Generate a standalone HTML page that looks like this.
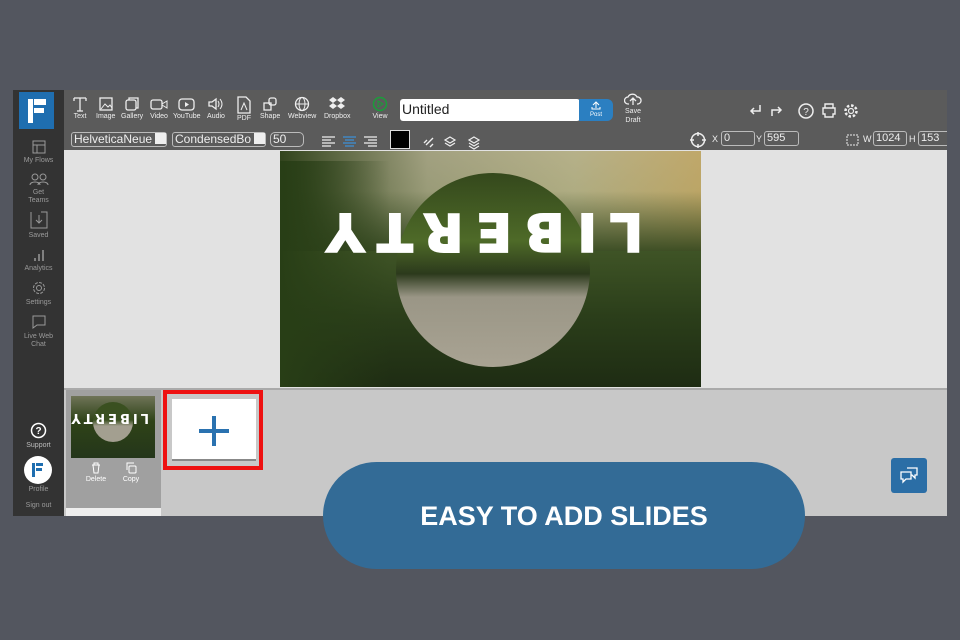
<!DOCTYPE html>
<html><head><style>
*{margin:0;padding:0;box-sizing:border-box}
body{width:960px;height:640px;background:#53565f;font-family:"Liberation Sans",sans-serif;position:relative;overflow:hidden}
.abs{position:absolute}
.side{left:13px;top:90px;width:51px;height:426px;background:#333}
.si{position:absolute;left:0;width:51px;text-align:center;color:#9a9a9a;font-size:7px;line-height:8px}
.tb{left:64px;top:90px;width:883px;height:60px;background:#5b5b5b}
.tool{position:absolute;top:6px;text-align:center;color:#eee;font-size:7px}
.tool svg{display:block;margin:0 auto 1px}
.inp{position:absolute;border:1px solid #bbb;border-radius:3px;color:#eee;font-size:11px;line-height:13px;padding-left:2px;height:15px}
</style></head><body>
<div class="abs side">
  <div class="abs" style="left:6px;top:2px;width:35px;height:37px;background:#1f6eb0"></div>
  <svg class="abs" style="left:14px;top:8px" width="20" height="26"><rect x="1" y="1" width="5" height="24" fill="#fff"/><rect x="7" y="1" width="12" height="6" fill="#fff"/><rect x="7" y="10" width="10" height="5" fill="#fff"/></svg>
  <div class="si" style="top:50px"><svg width="14" height="14"><rect x="1" y="1" width="12" height="12" fill="none" stroke="#999"/><line x1="1" y1="5" x2="13" y2="5" stroke="#999"/><line x1="5" y1="5" x2="5" y2="13" stroke="#999"/></svg><br>My Flows</div>
  <div class="si" style="top:82px"><svg width="20" height="14"><circle cx="6" cy="5" r="3" fill="none" stroke="#999"/><circle cx="14" cy="5" r="3" fill="none" stroke="#999"/><path d="M1 13c0-4 10-4 10 0M9 13c0-4 10-4 10 0" fill="none" stroke="#999"/></svg><br>Get<br>Teams</div>
  <div class="si" style="top:121px"><svg width="18" height="18"><path d="M1 1v16h16V1H11" fill="none" stroke="#999"/><path d="M9 4v8M6 9l3 3 3-3" fill="none" stroke="#999"/></svg><br>Saved</div>
  <div class="si" style="top:158px"><svg width="14" height="14"><path d="M3 13v-3M7 13V6M11 13V2" stroke="#999" stroke-width="1.5"/></svg><br>Analytics</div>
  <div class="si" style="top:190px"><svg width="16" height="16"><circle cx="8" cy="8" r="5.5" fill="none" stroke="#999" stroke-dasharray="3 1.3"/><circle cx="8" cy="8" r="2.5" fill="none" stroke="#999"/></svg><br>Settings</div>
  <div class="si" style="top:224px"><svg width="16" height="16"><path d="M2 2h12v9H6l-4 3z" fill="none" stroke="#999"/></svg><br>Live Web<br>Chat</div>
  <div class="si" style="top:332px;color:#bbb"><svg width="17" height="17"><circle cx="8.5" cy="8.5" r="7" fill="none" stroke="#fff" stroke-width="1.5"/><text x="8.5" y="12" font-size="10" text-anchor="middle" fill="#fff" font-family="Liberation Sans" font-weight="bold">?</text></svg><br>Support</div>
  <div class="abs" style="left:11px;top:366px;width:28px;height:28px;border-radius:50%;background:#fff"></div>
  <svg class="abs" style="left:18px;top:372px" width="14" height="16"><rect x="1" y="1" width="3" height="14" fill="#1f6eb0"/><rect x="5" y="1" width="7" height="3" fill="#1f6eb0"/><rect x="5" y="6" width="6" height="3" fill="#1f6eb0"/></svg>
  <div class="si" style="top:396px">Profile</div>
  <div class="si" style="top:412px">Sign out</div>
</div>
<div class="abs tb">
  <div class="tool" style="left:8px"><svg width="16" height="16"><path d="M2 2h12M8 2v13M2 2v3M14 2v3M5 15h6" stroke="#eee" fill="none" stroke-width="1.3"/></svg>Text</div>
  <div class="tool" style="left:32px"><svg width="16" height="16"><rect x="2" y="2" width="12" height="12" fill="none" stroke="#eee" stroke-width="1.3"/><path d="M3 13l4-5 3 3 2-2 2 3" stroke="#eee" fill="none"/></svg>Image</div>
  <div class="tool" style="left:57px"><svg width="16" height="16"><rect x="2" y="4" width="10" height="10" rx="2" fill="none" stroke="#eee" stroke-width="1.3"/><path d="M5 4V2h9v10h-2" stroke="#eee" fill="none" stroke-width="1.3"/></svg>Gallery</div>
  <div class="tool" style="left:86px"><svg width="18" height="16"><rect x="1" y="4" width="11" height="9" rx="2" fill="none" stroke="#eee" stroke-width="1.3"/><path d="M12 8l5-3v7l-5-3" stroke="#eee" fill="none"/></svg>Video</div>
  <div class="tool" style="left:109px"><svg width="18" height="16"><rect x="1" y="3" width="15" height="11" rx="3" fill="none" stroke="#eee" stroke-width="1.3"/><path d="M7 6v5l4-2.5z" fill="#eee"/></svg>YouTube</div>
  <div class="tool" style="left:143px"><svg width="18" height="16"><path d="M2 6h3l4-3v10l-4-3H2z" fill="none" stroke="#eee" stroke-width="1.3"/><path d="M11 5q2 3 0 6M13 3q4 5 0 10" fill="none" stroke="#eee"/></svg>Audio</div>
  <div class="tool" style="left:172px"><svg width="16" height="18"><path d="M2 1h8l4 4v12H2z" fill="none" stroke="#eee" stroke-width="1.3"/><path d="M5 14l3-7 3 7" fill="none" stroke="#eee"/></svg>PDF</div>
  <div class="tool" style="left:196px"><svg width="16" height="16"><rect x="2" y="7" width="7" height="7" fill="none" stroke="#eee" stroke-width="1.3"/><rect x="7" y="2" width="7" height="7" rx="2" fill="none" stroke="#eee" stroke-width="1.3"/></svg>Shape</div>
  <div class="tool" style="left:224px"><svg width="16" height="16"><circle cx="8" cy="8" r="6.5" fill="none" stroke="#eee" stroke-width="1.3"/><ellipse cx="8" cy="8" rx="3" ry="6.5" fill="none" stroke="#eee"/><path d="M1.5 8h13" stroke="#eee"/></svg>Webview</div>
  <div class="tool" style="left:260px"><svg width="18" height="16"><path d="M5 1l4 3-4 3-4-3zM13 1l4 3-4 3-4-3zM5 7l4 3-4 3-4-3zM13 7l4 3-4 3-4-3z" fill="#eee"/></svg>Dropbox</div>
  <div class="tool" style="left:308px"><svg width="16" height="16"><circle cx="8" cy="8" r="6.5" fill="none" stroke="#1a9e3a" stroke-width="1.5"/><path d="M6 5v6l5-3z" fill="none" stroke="#1a9e3a"/></svg>View</div>
  <div class="abs" style="left:336px;top:9px;width:180px;height:22px;background:#fff;border-radius:3px;font-size:14px;padding:2px 2px;color:#222">Untitled</div>
  <div class="abs" style="left:515px;top:9px;width:34px;height:22px;background:#2b7fc1;border-radius:0 6px 6px 0;color:#fff;font-size:6px;text-align:center;padding-top:2px"><svg width="10" height="9"><path d="M5 7V1M2 4l3-3 3 3M1 6v2h8V6" stroke="#fff" fill="none"/></svg><br>Post</div>
  <div class="tool" style="left:560px;top:2px;line-height:9px"><svg width="18" height="14"><path d="M5 12H4a3 3 0 010-7 5 5 0 019 0 3 3 0 011 7h-1M9 13V6M6 9l3-3 3 3" stroke="#eee" fill="none" stroke-width="1.3"/></svg>Save<br>Draft</div>
  <svg class="abs" style="left:684px;top:12px" width="110" height="18"><path d="M12 3v6H3M6 6L3 9l3 3" stroke="#eee" fill="none" stroke-width="1.5"/><path d="M24 14V8h9M30 5l3 3-3 3" stroke="#eee" fill="none" stroke-width="1.5"/><circle cx="58" cy="9" r="7" fill="none" stroke="#eee" stroke-width="1.5"/><text x="58" y="13" font-size="10" text-anchor="middle" fill="#eee" font-family="Liberation Sans">?</text><path d="M77 6V2h8v4M75 6h12v6h-2v3h-8v-3h-2z" stroke="#eee" fill="none" stroke-width="1.4"/><circle cx="103" cy="9" r="5.5" fill="none" stroke="#eee" stroke-width="2.5" stroke-dasharray="2.5 1.8"/><circle cx="103" cy="9" r="2.5" fill="none" stroke="#eee" stroke-width="1.2"/></svg>
  <div class="inp" style="left:7px;top:42px;width:96px;font-size:12px">HelveticaNeue</div><div class="abs" style="left:91px;top:43px;width:11px;height:11px;background:#eee"></div>
  <div class="inp" style="left:108px;top:42px;width:94px;font-size:12px">CondensedBo</div><div class="abs" style="left:190px;top:43px;width:11px;height:11px;background:#eee"></div>
  <div class="inp" style="left:206px;top:42px;width:34px;border-radius:5px;font-size:12px">50</div>
  <svg class="abs" style="left:256px;top:46px" width="60" height="12"><path d="M2 1h13M2 4h9M2 7h13M2 10h9" stroke="#eee" stroke-width="1.3"/><path d="M23 1h13M25 4h9M23 7h13M25 10h9" stroke="#3d8fd6" stroke-width="1.3"/><path d="M44 1h13M48 4h9M44 7h13M48 10h9" stroke="#eee" stroke-width="1.3"/></svg>
  <div class="abs" style="left:326px;top:40px;width:20px;height:19px;background:#000;border:1px solid #ddd"></div>
  <svg class="abs" style="left:358px;top:44px" width="66" height="16"><path d="M4 11l7-7M2 9l3-3M8 13l3-3" stroke="#eee" stroke-width="1.4" fill="none"/><path d="M28 3l5 3-5 3-5-3zM23 9l5 3 5-3" stroke="#eee" fill="none" stroke-width="1.2"/><path d="M52 3l5 3-5 3-5-3zM47 9l5 3 5-3M47 12l5 3 5-3" stroke="#eee" fill="none" stroke-width="1.2"/></svg>
  <svg class="abs" style="left:625px;top:41px" width="18" height="18"><circle cx="9" cy="9" r="6.5" fill="none" stroke="#eee" stroke-width="1.5"/><path d="M9 1v4M9 13v4M1 9h4M13 9h4" stroke="#eee" stroke-width="1.5"/></svg>
  <span class="abs" style="left:648px;top:44px;color:#eee;font-size:9px">X</span><div class="inp" style="left:657px;top:41px;width:34px">0</div>
  <span class="abs" style="left:692px;top:44px;color:#eee;font-size:9px">Y</span><div class="inp" style="left:700px;top:41px;width:35px">595</div>
  <svg class="abs" style="left:782px;top:44px" width="14" height="12"><rect x="1" y="1" width="11" height="10" fill="none" stroke="#eee" stroke-dasharray="2 1"/></svg>
  <span class="abs" style="left:799px;top:44px;color:#eee;font-size:9px">W</span><div class="inp" style="left:809px;top:41px;width:34px">1024</div>
  <span class="abs" style="left:845px;top:44px;color:#eee;font-size:9px">H</span><div class="inp" style="left:854px;top:41px;width:29px;border-right:none;border-radius:3px 0 0 3px">153</div>
</div>
<div class="abs" style="left:64px;top:150px;width:883px;height:238px;background:#e2e2e2"></div>
<div class="abs" style="left:280px;top:151px;width:421px;height:236px;overflow:hidden;background:linear-gradient(180deg,#8f8f72 0%,#6e7a50 20%,#3f5426 42%,#2b3e1a 70%,#1e2c13 100%)">
  <div class="abs" style="left:0;top:0;width:421px;height:100px;background:linear-gradient(180deg,rgba(0,0,0,0) 40%,rgba(50,70,30,.9) 100%),linear-gradient(90deg,rgba(40,60,20,.9) 0%,rgba(170,168,135,.7) 35%,rgba(195,188,145,.75) 70%,rgba(200,172,105,.85) 100%)"></div>
  <div class="abs" style="left:0;top:10px;width:110px;height:226px;background:linear-gradient(90deg,rgba(40,62,22,1),rgba(40,62,22,0));"></div>
  <div class="abs" style="left:116px;top:22px;width:194px;height:194px;border-radius:50%;background:linear-gradient(180deg,#34481c 0%,#4e6a28 35%,#2c3a1c 52%,#9a9686 64%,#a9a393 100%)"></div>
  <div class="abs" style="left:52px;top:55px;width:311px;height:50px;color:#fff;font-weight:bold;font-size:52px;line-height:50px;letter-spacing:13px;text-align:center;transform:rotate(180deg);font-family:'DejaVu Sans',sans-serif;-webkit-text-stroke:2px #fff">LIBERTY</div>
</div>
<div class="abs" style="left:64px;top:388px;width:883px;height:128px;background:#c8c8c8;border-top:2px solid #aaa"></div>
<div class="abs" style="left:66px;top:390px;width:95px;height:126px;background:#a0a0a0"></div>
<div class="abs" style="left:71px;top:396px;width:84px;height:62px;overflow:hidden;background:linear-gradient(180deg,#6f7458,#2f4318 40%,#24361a)">
  <div class="abs" style="left:22px;top:6px;width:40px;height:40px;border-radius:50%;background:linear-gradient(180deg,#3a5020 45%,#a39f90 60%)"></div>
  <div class="abs" style="left:6px;top:14px;width:72px;height:14px;color:#fff;font-weight:bold;font-size:13px;line-height:14px;letter-spacing:3px;text-align:center;transform:rotate(180deg);font-family:'DejaVu Sans',sans-serif">LIBERTY</div>
</div>
<div class="abs" style="left:80px;top:462px;width:32px;text-align:center;color:#fff;font-size:7px"><svg width="12" height="12"><path d="M2 3h8M4 3V1h4v2M3 3l1 8h4l1-8" stroke="#fff" fill="none"/></svg><br>Delete</div>
<div class="abs" style="left:115px;top:462px;width:32px;text-align:center;color:#fff;font-size:7px"><svg width="12" height="12"><rect x="4" y="4" width="7" height="7" rx="1" fill="none" stroke="#fff"/><path d="M2 8V1h7" stroke="#fff" fill="none"/></svg><br>Copy</div>
<div class="abs" style="left:66px;top:508px;width:95px;height:8px;background:#eee"></div>
<div class="abs" style="left:163px;top:390px;width:100px;height:80px;border:4px solid #ee1111"></div>
<div class="abs" style="left:172px;top:399px;width:84px;height:62px;background:#fff;border-bottom:2px solid #888"></div>
<svg class="abs" style="left:197px;top:414px" width="34" height="34"><path d="M17 2v30M2 17h30" stroke="#2a72b0" stroke-width="4"/></svg>
<div class="abs" style="left:891px;top:458px;width:36px;height:35px;background:#2b6ea6;border-radius:3px"></div>
<svg class="abs" style="left:899px;top:466px" width="20" height="20"><path d="M8 2h10v7h-2v3l-3-3h-1M2 6h10v7H7l-3 3v-3H2z" fill="none" stroke="#fff" stroke-width="1.3"/></svg>
<div class="abs" style="left:323px;top:462px;width:482px;height:107px;border-radius:54px;background:#336b96;color:#fff;font-weight:bold;font-size:27px;line-height:109px;text-align:center">EASY TO ADD SLIDES</div>
</body></html>
